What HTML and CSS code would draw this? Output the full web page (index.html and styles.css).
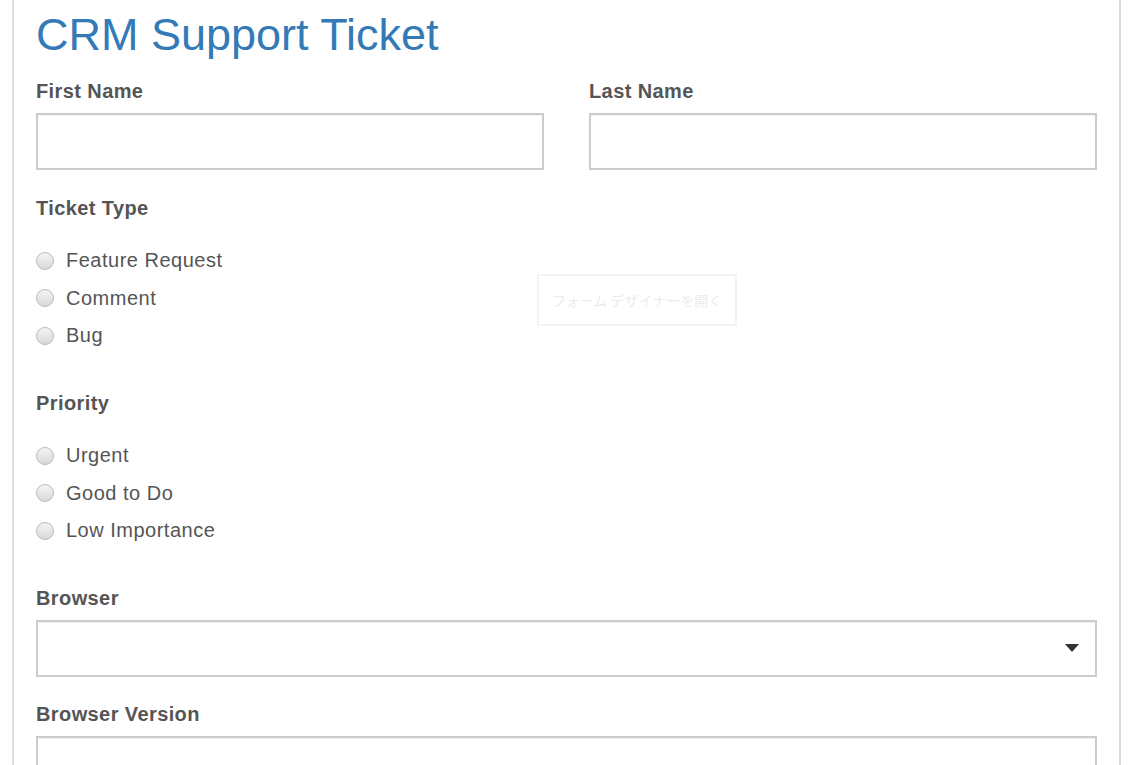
FILE: index.html
```html
<!DOCTYPE html>
<html lang="en">
<head>
<meta charset="utf-8">
<title>CRM Support Ticket</title>
<link rel="stylesheet" href="styles.css">
</head>
<body>
<div class="sheet">
  <h1 class="title">CRM Support Ticket</h1>

  <div class="row-2">
    <div class="field">
      <label class="lbl">First Name</label>
      <input class="box" type="text">
    </div>
    <div class="field">
      <label class="lbl">Last Name</label>
      <input class="box" type="text">
    </div>
  </div>

  <div class="group">
    <div class="lbl">Ticket Type</div>
    <div class="options">
      <label class="opt"><input type="radio" name="tt"><span>Feature Request</span></label>
      <label class="opt"><input type="radio" name="tt"><span>Comment</span></label>
      <label class="opt"><input type="radio" name="tt"><span>Bug</span></label>
    </div>
  </div>

  <div class="group">
    <div class="lbl">Priority</div>
    <div class="options">
      <label class="opt"><input type="radio" name="pr"><span>Urgent</span></label>
      <label class="opt"><input type="radio" name="pr"><span>Good to Do</span></label>
      <label class="opt"><input type="radio" name="pr"><span>Low Importance</span></label>
    </div>
  </div>

  <div class="field">
    <label class="lbl">Browser</label>
    <div class="box select">
      <svg class="caret" width="14" height="8" viewBox="0 0 14 8"><path d="M0 0H14L7 8Z" fill="#333"/></svg>
    </div>
  </div>

  <div class="field next">
    <label class="lbl">Browser Version</label>
    <input class="box" type="text">
  </div>

  <div class="designer">フォーム デザイナーを開く</div>
</div>
</body>
</html>
```

FILE: styles.css
```css
html, body {
  margin: 0;
  padding: 0;
  background: #fff;
}
body {
  font-family: "Liberation Sans", Arial, sans-serif;
  color: #555;
  overflow: hidden;
  height: 765px;
}
.sheet {
  position: relative;
  margin-left: 12px;
  width: 1061px;
  padding: 0 22px;
  border-left: 2px solid #dcdcdc;
  border-right: 2px solid #dcdcdc;
  height: 765px;
  overflow: hidden;
}
.title {
  margin: 0;
  padding-top: 10px;
  font-size: 45px;
  line-height: 50px;
  font-weight: normal;
  color: #337ab7;
}
.row-2 {
  display: grid;
  grid-template-columns: 508px 508px;
  column-gap: 45px;
  margin-top: 21px;
}
.field {
  display: flex;
  flex-direction: column;
}
.field.next {
  margin-top: 27px;
}
.lbl {
  display: block;
  font-size: 20px;
  line-height: 20px;
  letter-spacing: 0.4px;
  font-weight: bold;
  color: #555;
}
.box {
  box-sizing: border-box;
  height: 57px;
  margin-top: 12px;
  border: 2px solid #cccccc;
  box-shadow: inset 0 1px 1px rgba(0,0,0,0.06);
  background: #fff;
  outline: none;
  padding: 0 12px;
  font: inherit;
}
.group {
  margin-top: 28px;
}
.group + .group {
  margin-top: 39px;
}
.group + .field {
  margin-top: 38px;
}
.options {
  margin-top: 23.75px;
}
.opt {
  display: flex;
  align-items: center;
  height: 37.5px;
  font-size: 20px;
  letter-spacing: 0.5px;
  color: #555;
}
.opt input {
  -webkit-appearance: none;
  appearance: none;
  width: 18px;
  height: 18px;
  margin: 0 12px 0 0;
  border-radius: 50%;
  border: 1px solid #b9b9b9;
  background: linear-gradient(#f4f4f4, #d9d9d9);
  box-sizing: border-box;
}
.select {
  display: flex;
  align-items: center;
  justify-content: flex-end;
  padding-right: 16px;
}
.caret {
  display: block;
}
.designer {
  position: absolute;
  left: 523px;
  top: 274px;
  width: 200px;
  height: 52px;
  box-sizing: border-box;
  border: 2px solid #f3f3f3;
  color: #ebebeb;
  font-family: "Noto Sans CJK JP", sans-serif;
  font-size: 14px;
  display: flex;
  align-items: center;
  justify-content: center;
}
```
